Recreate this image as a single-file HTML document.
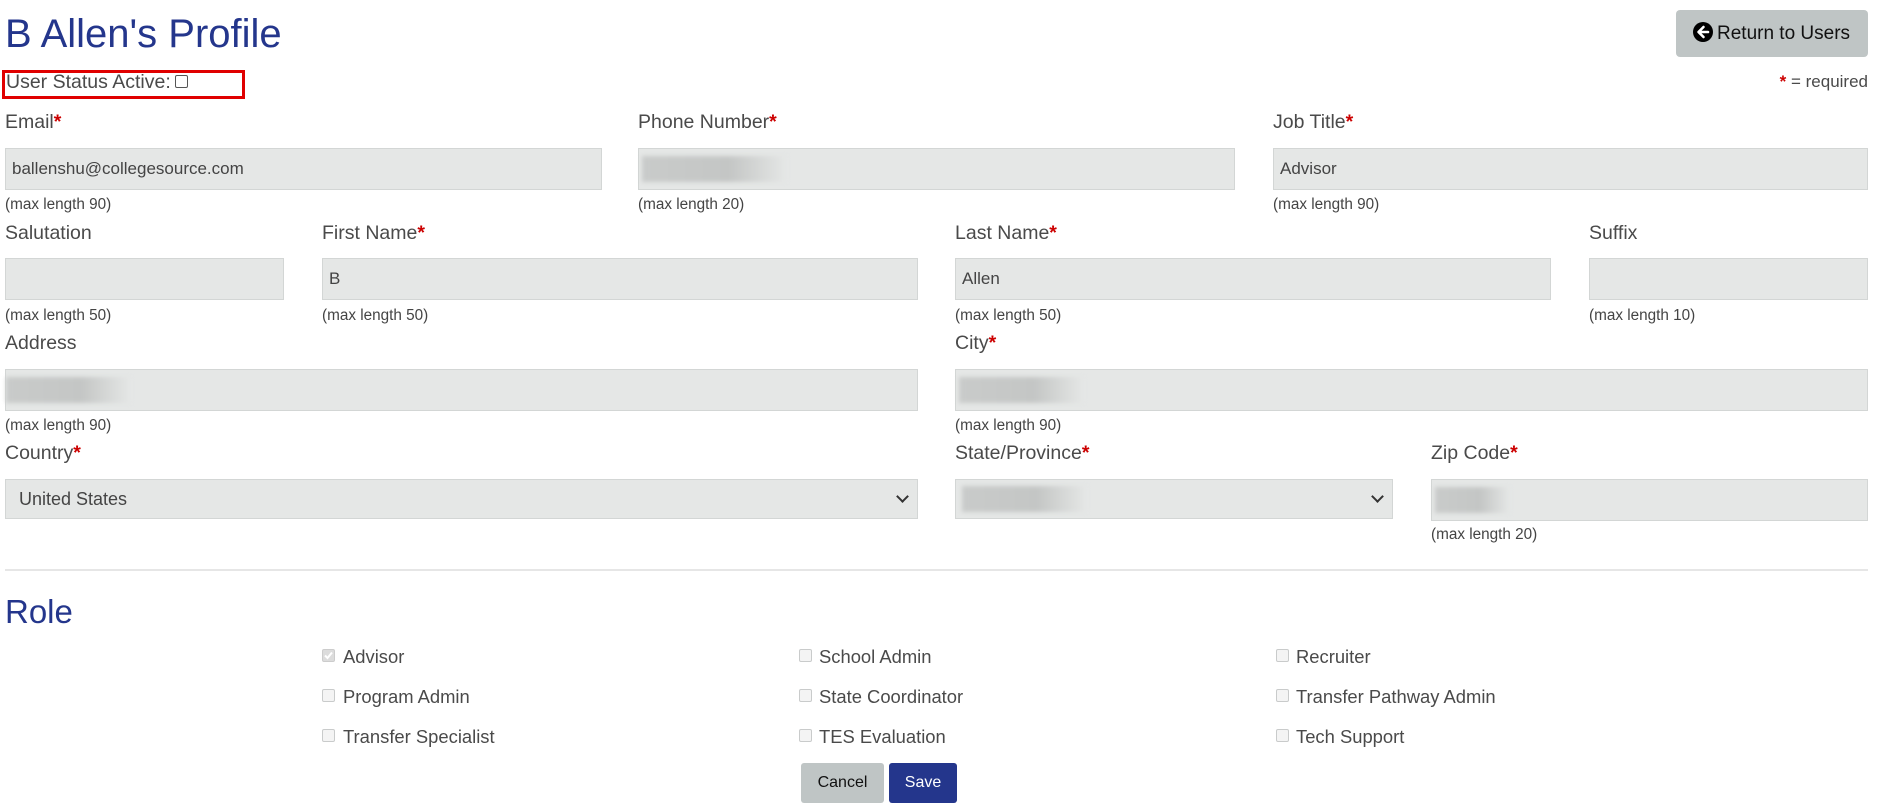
<!DOCTYPE html>
<html><head><meta charset="utf-8">
<style>
*{box-sizing:border-box;margin:0;padding:0}
body{width:1884px;height:812px;position:relative;background:#fff;font-family:"Liberation Sans",Arial,sans-serif;color:#4a4a4a;overflow:hidden}
.a{position:absolute;white-space:nowrap}
.lbl{font-size:19.5px;line-height:22px}
.lbl b{color:#c00;font-weight:bold}
.inp{position:absolute;height:42px;background:#e5e7e6;border:1px solid #d3d6d5;font-size:17px;line-height:40px;padding-left:6px;color:#444}
.ml{position:absolute;font-size:15.3px;line-height:16px;color:#444}
.blur{position:absolute;height:26px;top:7px;left:3px;background:linear-gradient(90deg,#c9cbca 0%,#c4c6c5 60%,#e5e7e6 100%);filter:blur(2px)}
.chev{position:absolute;right:10px;top:12px;width:9px;height:9px;border-right:2px solid #333;border-bottom:2px solid #333;transform:rotate(45deg)}
.cb{position:absolute;width:13px;height:13px;border:1px solid #c9cbcb;border-radius:2px;background:#f4f4f4}
.ct{position:absolute;font-size:18.4px;line-height:22px;color:#4a4a4a}
</style></head><body>
<div class="a" style="left:5px;top:10px;font-size:40px;line-height:48px;color:#24368c">B Allen's Profile</div>
<div class="a" style="left:1676px;top:10px;width:192px;height:47px;background:#bfc5c5;border-radius:4px;font-size:19px;line-height:47px;color:#111;padding-left:17px">
<svg width="20" height="20" viewBox="0 0 20 20" style="vertical-align:-3px;margin-right:4px"><circle cx="10" cy="10" r="10" fill="#000"/><path d="M10.5 5 L5.5 10 L10.5 15 M5.8 10 H15" stroke="#fff" stroke-width="2.6" fill="none" stroke-linecap="round" stroke-linejoin="round"/></svg>Return to Users</div>
<div class="a" style="left:2px;top:70px;width:243px;height:29px;border:3px solid #e00000"></div>
<div class="a lbl" style="left:6px;top:71px">User Status Active:</div>
<div class="cb" style="left:175px;top:75px;border-color:#555;background:#fff;width:13px;height:13px"></div>
<div class="a lbl" style="right:16px;top:71px;font-size:17px"><b>*</b> = required</div>

<div class="a lbl" style="left:5px;top:111px">Email<b>*</b></div>
<div class="a lbl" style="left:638px;top:111px">Phone Number<b>*</b></div>
<div class="a lbl" style="left:1273px;top:111px">Job Title<b>*</b></div>
<div class="inp" style="left:5px;top:148px;width:597px">ballenshu@collegesource.com</div>
<div class="inp" style="left:638px;top:148px;width:597px"><div class="blur" style="width:145px"></div></div>
<div class="inp" style="left:1273px;top:148px;width:595px">Advisor</div>
<div class="ml" style="left:5px;top:197px">(max length 90)</div>
<div class="ml" style="left:638px;top:197px">(max length 20)</div>
<div class="ml" style="left:1273px;top:197px">(max length 90)</div>

<div class="a lbl" style="left:5px;top:222px">Salutation</div>
<div class="a lbl" style="left:322px;top:222px">First Name<b>*</b></div>
<div class="a lbl" style="left:955px;top:222px">Last Name<b>*</b></div>
<div class="a lbl" style="left:1589px;top:222px">Suffix</div>
<div class="inp" style="left:5px;top:258px;width:279px"></div>
<div class="inp" style="left:322px;top:258px;width:596px">B</div>
<div class="inp" style="left:955px;top:258px;width:596px">Allen</div>
<div class="inp" style="left:1589px;top:258px;width:279px"></div>
<div class="ml" style="left:5px;top:308px">(max length 50)</div>
<div class="ml" style="left:322px;top:308px">(max length 50)</div>
<div class="ml" style="left:955px;top:308px">(max length 50)</div>
<div class="ml" style="left:1589px;top:308px">(max length 10)</div>

<div class="a lbl" style="left:5px;top:332px">Address</div>
<div class="a lbl" style="left:955px;top:332px">City<b>*</b></div>
<div class="inp" style="left:5px;top:369px;width:913px"><div class="blur" style="width:125px;left:0"></div></div>
<div class="inp" style="left:955px;top:369px;width:913px"><div class="blur" style="width:125px"></div></div>
<div class="ml" style="left:5px;top:418px">(max length 90)</div>
<div class="ml" style="left:955px;top:418px">(max length 90)</div>

<div class="a lbl" style="left:5px;top:442px">Country<b>*</b></div>
<div class="a lbl" style="left:955px;top:442px">State/Province<b>*</b></div>
<div class="a lbl" style="left:1431px;top:442px">Zip Code<b>*</b></div>
<div class="inp" style="left:5px;top:479px;width:913px;height:40px;line-height:38px;font-size:18px;padding-left:13px">United States<div class="chev"></div></div>
<div class="inp" style="left:955px;top:479px;width:438px;height:40px"><div class="blur" style="width:125px;top:6px;left:6px"></div><div class="chev"></div></div>
<div class="inp" style="left:1431px;top:479px;width:437px"><div class="blur" style="width:75px"></div></div>
<div class="ml" style="left:1431px;top:527px">(max length 20)</div>

<div class="a" style="left:5px;top:569px;width:1863px;height:2px;background:#e6e6e6"></div>
<div class="a" style="left:5px;top:591px;font-size:33px;line-height:42px;color:#24368c">Role</div>

<div class="cb" style="left:322px;top:649px;background:#dcdcdc;border-color:#ccc"><svg width="11" height="11" viewBox="0 0 11 11" style="position:absolute;left:0;top:0"><path d="M2 5.5 L4.5 8 L9 2.5" stroke="#fff" stroke-width="2" fill="none"/></svg></div>
<div class="ct" style="left:343px;top:646px">Advisor</div>
<div class="cb" style="left:322px;top:689px"></div><div class="ct" style="left:343px;top:686px">Program Admin</div>
<div class="cb" style="left:322px;top:729px"></div><div class="ct" style="left:343px;top:726px">Transfer Specialist</div>
<div class="cb" style="left:799px;top:649px"></div><div class="ct" style="left:819px;top:646px">School Admin</div>
<div class="cb" style="left:799px;top:689px"></div><div class="ct" style="left:819px;top:686px">State Coordinator</div>
<div class="cb" style="left:799px;top:729px"></div><div class="ct" style="left:819px;top:726px">TES Evaluation</div>
<div class="cb" style="left:1276px;top:649px"></div><div class="ct" style="left:1296px;top:646px">Recruiter</div>
<div class="cb" style="left:1276px;top:689px"></div><div class="ct" style="left:1296px;top:686px">Transfer Pathway Admin</div>
<div class="cb" style="left:1276px;top:729px"></div><div class="ct" style="left:1296px;top:726px">Tech Support</div>

<div class="a" style="left:801px;top:763px;width:83px;height:40px;background:#bfc5c5;border-radius:3px;font-size:16px;line-height:40px;text-align:center;color:#111">Cancel</div>
<div class="a" style="left:889px;top:763px;width:68px;height:40px;background:#24368c;border-radius:3px;font-size:16px;line-height:40px;text-align:center;color:#fff">Save</div>
</body></html>
